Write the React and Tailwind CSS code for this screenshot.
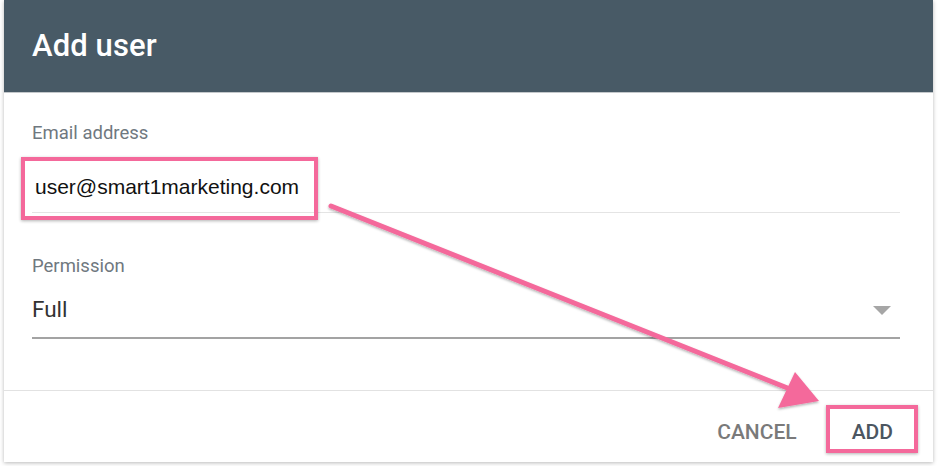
import React from "react";

export default function App() {
  return (
    <div className="relative w-[940px] h-[466px] bg-white overflow-hidden font-['Roboto',sans-serif]">
      <div className="ml-[4px] w-[929px] h-[462px] bg-white shadow-[0_1px_4px_rgba(0,0,0,0.28)] flex flex-col">
        <div className="h-[93px] shrink-0 bg-[#485a66] border-b border-[#c4c8cb] flex items-center px-[28px] pb-[2px]">
          <h1 className="text-white text-[31px] leading-none font-medium tracking-[0.1px]">Add user</h1>
        </div>
        <div className="flex-1 pl-[28px] pr-[33px] border-b border-[#e2e2e2]">
          <div className="pt-[29px] text-[18.5px] leading-[22px] text-[#6f7880]">Email address</div>
          <div className="mt-[30px] pb-[12px] border-b border-[#e4e4e4]">
            <div className="pl-[3px] text-[21px] leading-[26px] text-[#111] font-['Liberation_Sans',Arial,sans-serif]">
              user@smart1marketing.com
            </div>
          </div>
          <div className="mt-[42px] text-[18.5px] leading-[22px] text-[#6f7880]">Permission</div>
          <div className="mt-[18px] pb-[14px] border-b-2 border-[#a3a3a3] flex items-center justify-between pr-[9px]">
            <span className="text-[22.5px] leading-[28px] text-[#333]">Full</span>
            <svg width="18" height="9" viewBox="0 0 18 9" className="mt-[2px]">
              <polygon points="0,0 18,0 9,9" fill="#a6a6a6" />
            </svg>
          </div>
        </div>
        <div className="h-[71px] shrink-0 flex justify-end items-start pt-[29px] pr-[40px] gap-[55px]">
          <button className="text-[21px] leading-[24px] font-medium text-[#7a7a7a]">CANCEL</button>
          <button className="text-[21px] leading-[24px] font-medium text-[#4c5661]">ADD</button>
        </div>
      </div>

      {/* annotations */}
      <div className="absolute left-[21px] top-[157px] w-[297px] h-[63px] border-[4.5px] border-[#f4699b] shadow-[0_1px_3px_rgba(0,0,0,0.3)]" />
      <div className="absolute left-[826px] top-[405px] w-[92px] h-[48px] border-[4.5px] border-[#f4699b] shadow-[0_1px_3px_rgba(0,0,0,0.3)]" />
      <svg className="absolute left-0 top-0" width="940" height="466" viewBox="0 0 940 466">
        <defs>
          <filter id="sh" x="-10%" y="-10%" width="120%" height="130%">
            <feDropShadow dx="0" dy="1.5" stdDeviation="1.2" floodColor="#000" floodOpacity="0.3" />
          </filter>
        </defs>
        <g filter="url(#sh)">
          <line x1="331" y1="206" x2="790" y2="389" stroke="#f4699b" strokeWidth="5" strokeLinecap="round" />
          <polygon points="795,372 778,408 819,401" fill="#f4699b" />
        </g>
      </svg>
    </div>
  );
}
